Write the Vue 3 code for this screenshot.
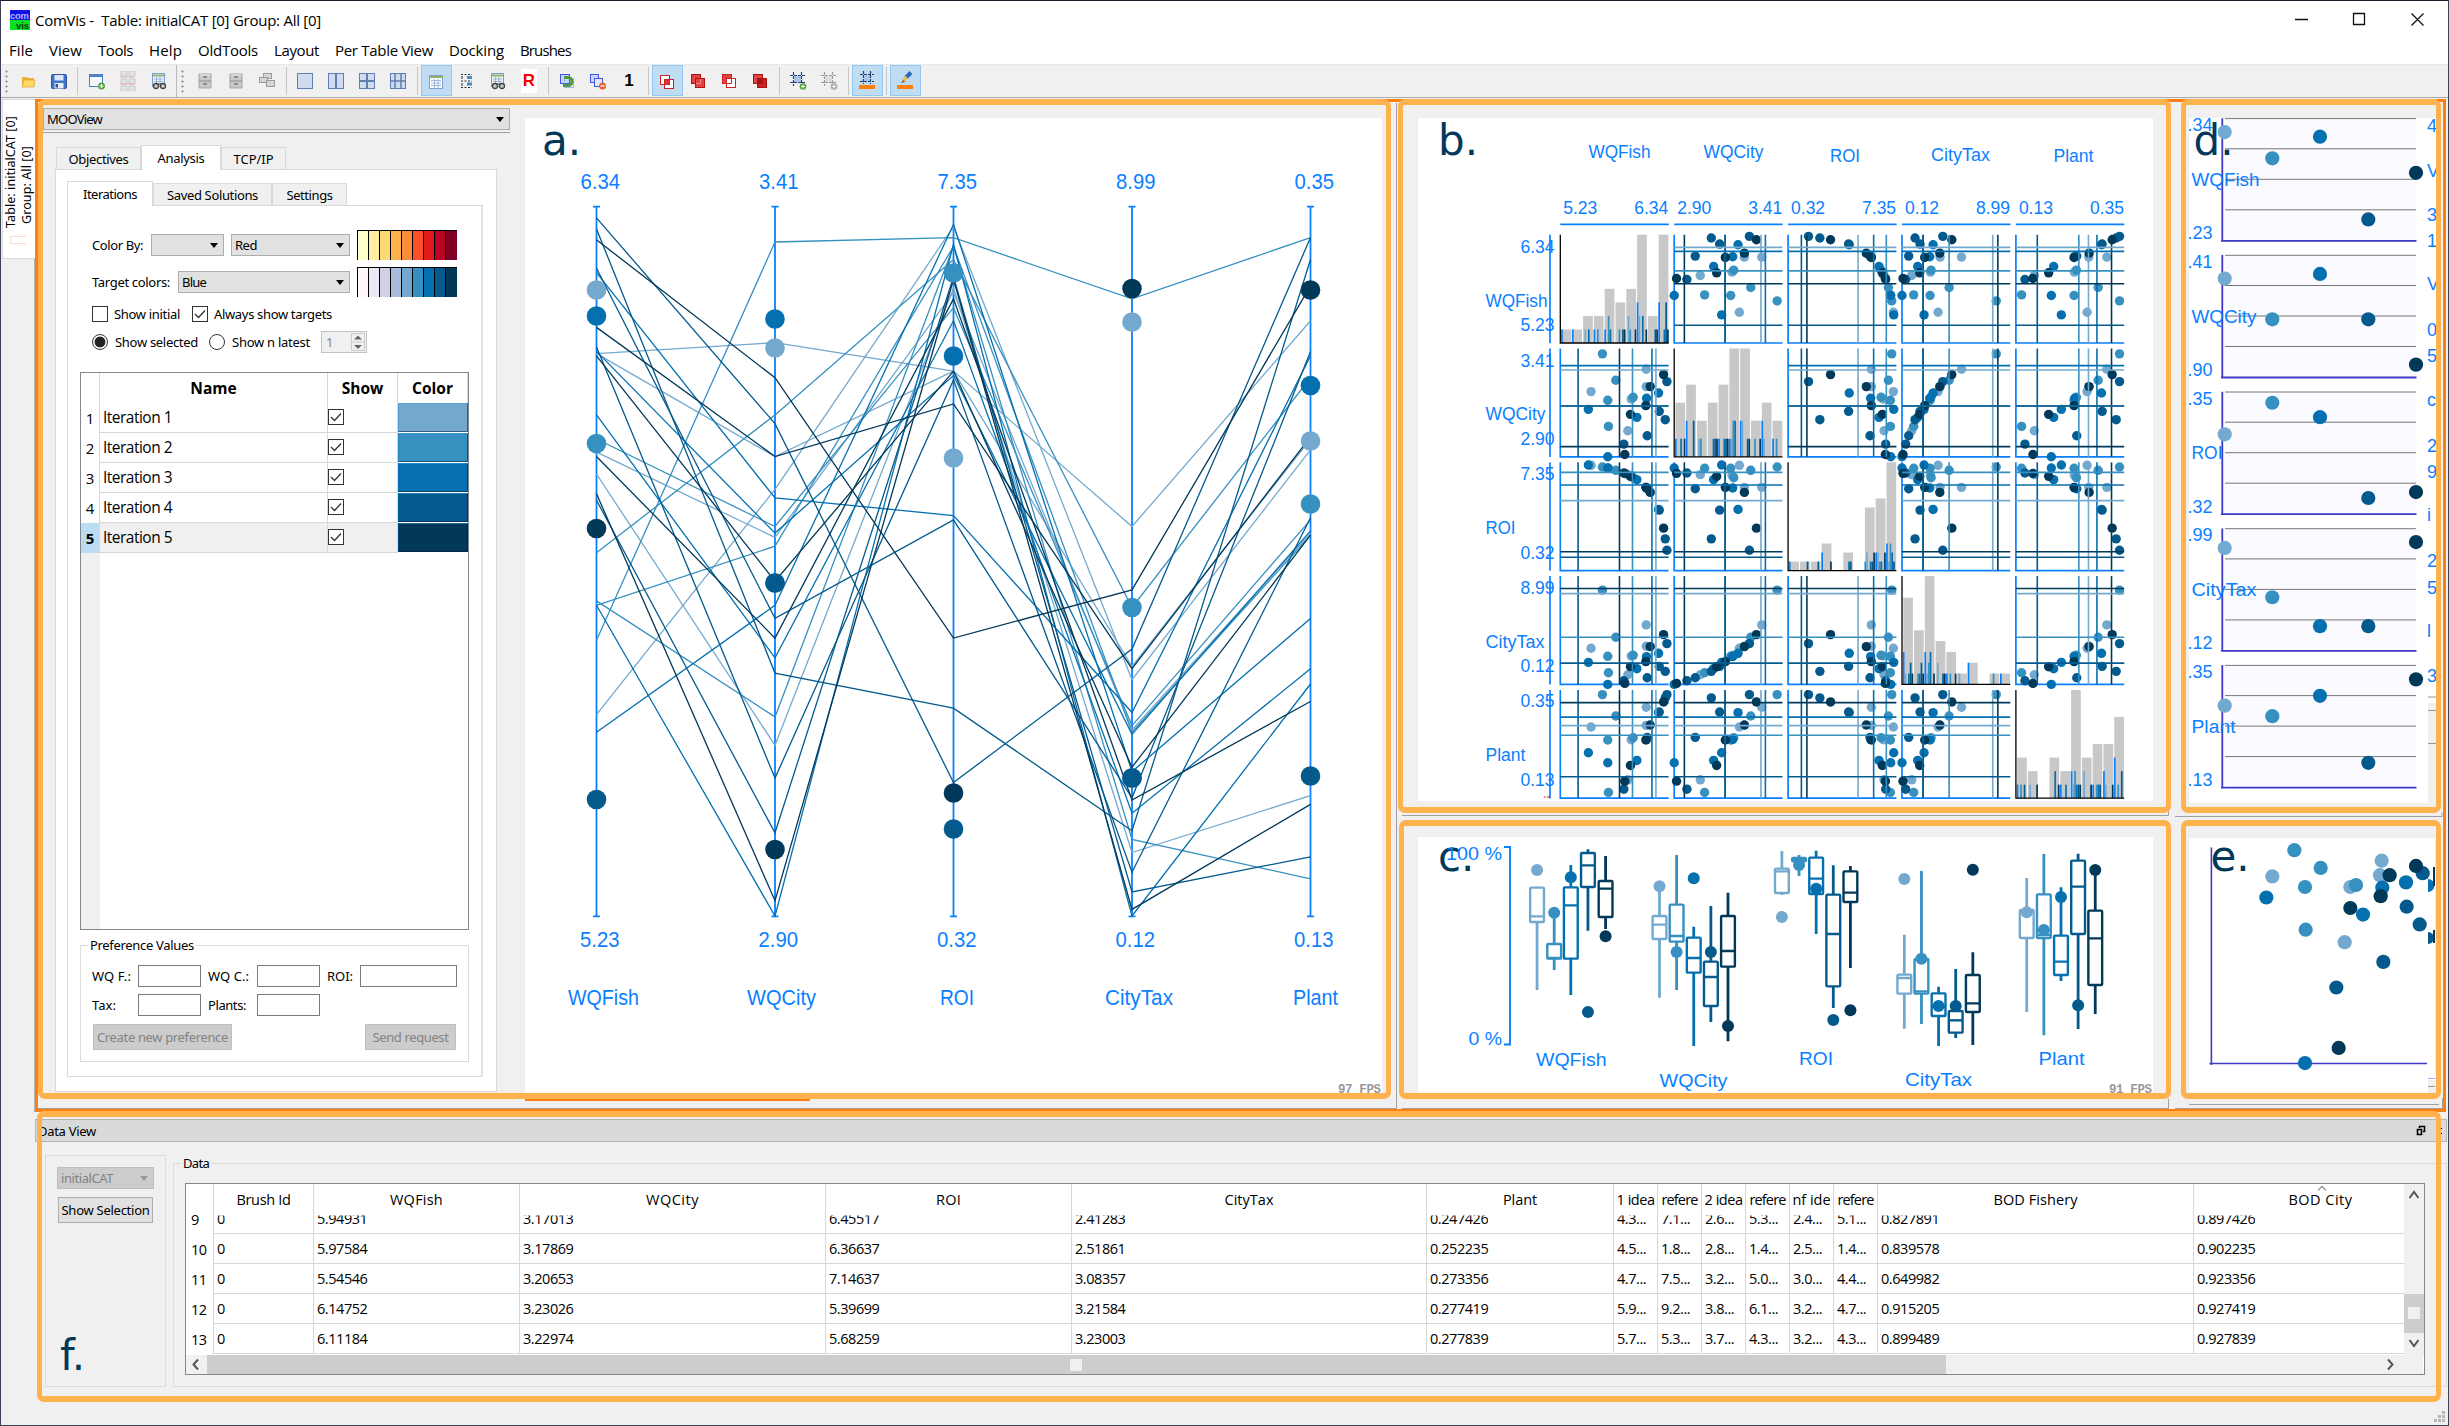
<script setup>
const palette = ['#74a9cf', '#3690c0', '#0570b0', '#045a8d', '#023858']
const reds = ['#ffffcc', '#ffeda0', '#fed976', '#feb24c', '#fd8d3c', '#fc4e2a', '#e31a1c', '#bd0026', '#800026']
const blues = ['#fff7fb', '#ece7f2', '#d0d1e6', '#a6bddb', ...palette]
const names = ['WQFish', 'WQCity', 'ROI', 'CityTax', 'Plant']
const maxs = ['6.34', '3.41', '7.35', '8.99', '0.35']
const mins = ['5.23', '2.90', '0.32', '0.12', '0.13']

// Spreads the letters of a label over a given length in pixels.
const vFit = {
  mounted(el, { value, modifiers }) {
    const range = document.createRange()
    range.selectNodeContents(el)
    const box = range.getBoundingClientRect()
    const natural = modifiers.tall ? box.height : box.width
    el.style.letterSpacing = (value - natural) / el.textContent.trim().length + 'px'
  }
}

// [iteration, WQFish, WQCity, ROI, CityTax, Plant] in plot units (0..324)
const raw = [
  [1, 257, 210, 249, 114, 218], [1, 257, 262, 249, 178, 272], [1, 212, 173, 285, 85, 175], [1, 202, 78, 287, 29, 55], [1, 92, 195, 315, 108, 213],
  [2, 218, 178, 278, 87, 181], [2, 166, 229, 300, 141, 246], [2, 144, 91, 306, 35, 17], [2, 142, 169, 306, 84, 174], [2, 126, 308, 310, 282, 310],
  [3, 294, 191, 183, 93, 256], [3, 258, 175, 247, 83, 176], [3, 229, 118, 272, 47, 113], [3, 142, 0, 307, 0, 106], [3, 84, 142, 316, 66, 136],
  [4, 314, 111, 95, 39, 300], [4, 319, 225, 61, 122, 310], [4, 296, 136, 181, 54, 258], [4, 260, 63, 245, 20, 182], [4, 190, 38, 292, 11, 27],
  [5, 309, 246, 127, 149, 288], [5, 256, 153, 249, 68, 174], [5, 269, 210, 234, 113, 219], [5, 210, 127, 282, 53, 98], [5, 193, 7, 291, 3, 51]
]
const points = raw.map(([k, ...v]) => ({ k, v: v.map(n => n / 324) }))

const axisX = [596.5, 775, 953.5, 1132, 1310.5]
const pcY = f => 916 - f * 709
const pcLines = points.map(p => ({ c: palette[p.k - 1], d: p.v.map((f, i) => `${axisX[i]},${pcY(f).toFixed(1)}`).join(' ') }))
// target height of every iteration on every axis
const targets = [
  [290, 443.5, 316, 799.5, 528.5],
  [348, 583, 319, 583, 849.5],
  [458, 273, 356, 829, 793],
  [322, 607.5, 778, 778, 288.5],
  [441, 504, 385.5, 776, 290]
]
const tf = targets.map(a => a.map(y => (916 - y) / 709))
const pcNames = [[568, 71], [747, 69], [940, 34], [1105, 68], [1293, 45]]

const cellX = i => 1560.3 + i * 113.9
const cellY = i => 234.7 + i * 113.8
const S = 108.3
const totals = [
  [1, 1, 2, 2, 4, 3, 4, 8, 2, 8],
  [3, 4, 2, 3, 4, 6, 6, 2, 3, 2],
  [1, 1, 1, 3, 0, 2, 0, 7, 8, 12],
  [8, 5, 10, 4, 3, 1, 2, 0, 1, 1],
  [3, 2, 0, 3, 2, 8, 3, 4, 4, 6]
]
const cells = []
for (let r = 0; r < 5; r++) {
  for (let c = 0; c < 5; c++) {
    const x = cellX(c)
    const y = cellY(r)
    if (r === c) {
      const unit = S / Math.max(...totals[r])
      const grey = totals[r].map((n, b) => ({ x: x + 1.2 + b * 10.8, y: y + S - n * unit, h: n * unit }))
      const bars = []
      totals[r].forEach((n, b) => {
        const counts = palette.map((_, k) => points.filter(p => p.k === k + 1 && Math.min(9, Math.floor(p.v[r] * 10)) === b).length)
        const rest = Math.max(0, n - counts.reduce((s, q) => s + q, 0))
        ;[rest, ...counts].forEach((q, s) => {
          const m = Math.min(q, 3)
          if (m) bars.push({ x: x + 0.8 + b * 10.8 + s * 1.75, y: y + S - m * unit, h: m * unit, c: s ? palette[s - 1] : '#0a80ff' })
        })
      })
      cells.push({ x, y, diag: true, grey, bars })
    } else {
      cells.push({
        x, y, diag: false,
        dots: points.map(p => ({ x: x + p.v[c] * S, y: y + S - p.v[r] * S, c: palette[p.k - 1] })),
        vs: tf[c].map((f, k) => ({ p: x + f * S, c: palette[k] })),
        hs: tf[r].map((f, k) => ({ p: y + S - f * S, c: palette[k] }))
      })
    }
  }
}
const topNames = [[1588.5, 158, 62], [1703.5, 158, 60], [1830, 162, 30], [1931, 160.5, 59], [2053.5, 162, 40]]
const sideWidths = [62, 60, 30, 59, 40]

// [centre, whisker top, box top, median, box bottom, whisker bottom, target]
const boxRaw = [
  [282, 260, 263, 349, 366, 570, 210], [316, 340, 432, 474, 476, 510, 338], [349, 195, 262, 316, 476, 585, 232], [383, 148, 159, 196, 261, 392, 636], [418, 168, 243, 266, 351, 387, 409],
  [525, 258, 348, 374, 417, 593, 259], [559, 165, 314, 408, 425, 570, 456], [593, 380, 413, 474, 518, 738, 235], [627, 318, 485, 531, 618, 666, 456], [661, 278, 348, 453, 500, 724, 678],
  [768, 153, 206, 214, 279, 285, 351], [802, 165, 174, 180, 184, 228, 195], [836, 152, 173, 236, 282, 402, 266], [870, 196, 284, 402, 559, 624, 660], [904, 198, 214, 278, 306, 504, 631],
  [1011, 404, 524, 534, 581, 686, 237], [1045, 213, 477, 574, 581, 672, 476], [1079, 560, 580, 620, 648, 738, 618], [1113, 507, 633, 661, 698, 714, 618], [1147, 457, 525, 610, 636, 735, 209],
  [1254, 234, 330, 336, 414, 636, 337], [1288, 162, 283, 405, 414, 706, 390], [1322, 262, 407, 485, 525, 543, 291], [1356, 161, 182, 260, 402, 687, 616], [1390, 225, 332, 415, 555, 642, 210]
]
const boxes = boxRaw.map(([x, ...ys], i) => {
  const [wt, top, med, bot, wb, dot] = ys.map(v => 800 + v / 3)
  return { x: 1395 + x / 1.985, wt, top, med, bot, wb, dot, c: palette[i % 5] }
})
const boxNames = [[1536, 1066, 70.5], [1659.5, 1087, 68], [1799, 1065, 34], [1905, 1086, 67], [2038.5, 1065, 46]]

const stripX = [2224.7, 2272.3, 2320, 2368.3, 2416]
const stripRaw = [[64, 104, 71, 197, 126], [287, 349, 280, 349, 418], [524, 476, 498, 621, 612], [697, 772, 816, 816, 688], [937, 953, 922, 1024, 897]]
const strips = stripRaw.map((ys, i) => ({ y: 118.3 + i * 136.7, dots: ys.map((v, k) => ({ x: stripX[k], y: 90 + v / 1.522, c: palette[k] })) }))
const stripNameW = [68, 65, 31, 65, 44]
const slivers = [['4', 132], ['V', 177], ['3', 221], ['1', 247], ['V', 290], ['0', 336], ['5', 362], ['c', 406], ['2', 452], ['9', 478], ['i', 521], ['2', 567], ['5', 594], ['l', 637], ['3', 682]]

const scatter = [
  [403, 1157, 2], [337, 1197, 1], [319, 1229, 3], [482, 1184, 2], [435, 1213, 2], [571, 1213, 1], [588, 1210, 2], [437, 1278, 2], [665, 1173, 1],
  [660, 1195, 1], [667, 1214, 3], [689, 1195, 5], [662, 1227, 5], [571, 1245, 5], [609, 1255, 3], [554, 1297, 1], [529, 1366, 4], [536, 1458, 5],
  [435, 1481, 3], [670, 1327, 4], [738, 1206, 3], [740, 1243, 4], [788, 1192, 4], [768, 1181, 5], [779, 1270, 4]
].map(([x, y, k]) => ({ x: 2160 + x / 3, y: 90 + y / 1.522, c: palette[k - 1] }))

const menus = [['File', 24], ['View', 33], ['Tools', 35], ['Help', 33], ['OldTools', 60], ['Layout', 45], ['Per Table View', 98], ['Docking', 55], ['Brushes', 51]]
const toolGroups = [
  ['open', 'save'], ['addwin', 'grid', 'find'], ['!'], ['cabinet', 'cabinet', 'stack'], ['pane1', 'pane2', 'pane4', 'pane6'],
  ['*table', 'rows', 'find', 'R'], ['green', 'minus', 'one'], ['*sq1', 'sq2', 'sq3', 'sq4'], ['crop', 'cropgrey'], ['*cropo'], ['*brush']
]
const headers = [['', 0], ['Brush Id', 54], ['WQFish', 53], ['WQCity', 53], ['ROI', 25], ['CityTax', 49], ['Plant', 34], ['1 idea', 38], ['refere', 36], ['2 idea', 38], ['refere', 36], ['nf ide', 38], ['refere', 36], ['BOD Fishery', 84], ['BOD City', 64]]
const rows = [
  ['9', '0', '5.94931', '3.17013', '6.45517', '2.41283', '0.247426', '4.3...', '7.1...', '2.6...', '5.3...', '2.4...', '5.1...', '0.827891', '0.897426'],
  ['10', '0', '5.97584', '3.17869', '6.36637', '2.51861', '0.252235', '4.5...', '1.8...', '2.8...', '1.4...', '2.5...', '1.4...', '0.839578', '0.902235'],
  ['11', '0', '5.54546', '3.20653', '7.14637', '3.08357', '0.273356', '4.7...', '7.5...', '3.2...', '5.0...', '3.0...', '4.4...', '0.649982', '0.923356'],
  ['12', '0', '6.14752', '3.23026', '5.39699', '3.21584', '0.277419', '5.9...', '9.2...', '3.8...', '6.1...', '3.2...', '4.7...', '0.915205', '0.927419'],
  ['13', '0', '6.11184', '3.22974', '5.68259', '3.23003', '0.277839', '5.7...', '5.3...', '3.7...', '4.3...', '3.2...', '4.3...', '0.899489', '0.927839']
]
</script>

<template>
  <div class="window">
    <header class="title">
      <svg class="logo" width="20" height="20" viewBox="0 0 20 20">
        <rect width="20" height="11" fill="#1010e0" /><rect y="10" width="20" height="10" fill="#08e020" />
        <text x="0" y="9" font-size="9.5" fill="#a9b4ff" textLength="19">com</text>
        <text x="6" y="18.5" font-size="9.5" fill="#063a10" textLength="13">vis</text>
      </svg>
      <span v-fit="286" class="caption">ComVis -&nbsp; Table: initialCAT [0] Group: All [0]</span>
      <svg class="controls" width="150" height="16" viewBox="0 0 150 16" fill="none" stroke="#111" stroke-width="1.3">
        <path d="M6 7.5h13M64.5 1.5h11v11h-11zM122.500 1.500l12 12M134.500 1.500l-12 12" />
      </svg>
    </header>
    <nav class="menu"><span v-for="m in menus" :key="m[0]" class="menu-item" :style="{ width: m[1] + 'px' }"><span v-fit="m[1]">{{ m[0] }}</span></span></nav>

    <div class="toolbar">
      <i class="grip"></i>
      <template v-for="(g, gi) in toolGroups" :key="gi">
        <div v-if="g[0] === '!'" class="break"><i class="grip"></i></div>
        <template v-else>
          <i v-if="gi && toolGroups[gi - 1][0] !== '!'" class="sep"></i>
          <div v-for="(t, ti) in g" :key="ti" class="tool" :class="{ on: t[0] === '*' }">
            <b v-if="t === 'R'" class="r">R</b>
            <b v-else-if="t === 'one'" class="one">1</b>
            <svg v-else width="18" height="20" viewBox="0 0 18 20" fill="none">
              <g v-if="t === 'open'"><path d="M3 6h5l1 1h6v8H3z" fill="#e9b43c" /><path d="M5 9h11l-1 7H3z" fill="#ffd967" stroke="#dca32c" stroke-width=".7" /></g>
              <g v-else-if="t === 'save'"><rect x="1.500" y="3.500" width="15" height="14" rx="1" fill="#3f74c9" stroke="#2a56a0" /><rect x="4.500" y="4" width="9" height="5.500" fill="#dbe7fa" /><rect x="4.500" y="12" width="9" height="5.500" fill="#e9eef7" /><rect x="5.500" y="13" width="2.500" height="3.500" fill="#2a56a0" /></g>
              <g v-else-if="t === 'addwin'"><rect x="1.500" y="3.500" width="13" height="12" fill="#f4f8ff" stroke="#4d7fc4" /><path d="M1 5h14" stroke="#4d7fc4" stroke-width="2" /><circle cx="13.500" cy="15" r="3.500" fill="#5ca244" /><path d="M11.500 15h4M13.500 13v4" stroke="#fff" stroke-width="1.200" /></g>
              <g v-else-if="t === 'grid'" stroke="#c6c9ce"><path d="M2 0h6v5H2zM10 0h6v5h-6zM2 8h6v5H2zM10 8h6v5h-6zM2 15h6v5H2zM10 15h6v5h-6z" fill="#e2e3e6" /><path d="M1 6h15M1 13h15" stroke="#e3b0b0" /></g>
              <g v-else-if="t === 'find'"><rect x="2.500" y="2.500" width="12" height="13" fill="#eef3fb" stroke="#7d9cc9" /><path d="M3 4.500h11" stroke="#8fb36c" stroke-width="2" /><path d="M4 8h9M4 10.500h9M6.500 6v8M10 6v8" stroke="#8aa6cf" stroke-width=".8" /><circle cx="6" cy="15" r="2.500" fill="#ccc" stroke="#444" stroke-width="1.300" /><circle cx="13" cy="15" r="2.500" fill="#ccc" stroke="#444" stroke-width="1.300" /><path d="M7 13h5" stroke="#444" /></g>
              <g v-else-if="t === 'cabinet'"><path d="M3 3h12v14H3z" fill="#c9c9c9" stroke="#a5a5a5" /><path d="M3 10h12" stroke="#8c8c8c" /><path d="M7 6h4M7 13h4" stroke="#777" stroke-width="1.500" /><path d="M4 4h10" stroke="#efefef" /></g>
              <g v-else-if="t === 'stack'" fill="#d6d6d6" stroke="#9a9a9a"><rect x="5.500" y="2.500" width="8" height="5" /><rect x="1.500" y="6.500" width="8" height="5" /><rect x="8.500" y="9.500" width="8" height="6" /></g>
              <g v-else-if="t.startsWith('pane')" stroke="#5f7faf"><rect x="1.500" y="2.500" width="15" height="15" fill="#cfdcef" /><path v-if="t === 'pane2'" d="M9 2v16" stroke-width="2" /><path v-if="t === 'pane4'" d="M9 2v16M1 10h16" stroke-width="2" /><path v-if="t === 'pane6'" d="M6 2v16M12 2v16M1 10h16" stroke-width="1.500" /></g>
              <g v-else-if="t === '*table'"><rect x="2.500" y="4.500" width="13" height="13" fill="#fff" stroke="#7f9fce" /><path d="M2 6h14" stroke="#8fb36c" stroke-width="2" /><path d="M4 9.500h10M4 12h10M4 14.500h10M7.500 8v9M11 8v9" stroke="#9db6da" /></g>
              <g v-else-if="t === 'rows'" stroke="#333"><path d="M3 3.500h11M3 10h11M3 16.500h11" stroke-dasharray="2 1.500" /><path d="M9 6.500h5M9 13h5" stroke="#4a8abf" stroke-width="3" /><path d="M4 5v3M4 12v3" /></g>
              <g v-else-if="t === 'green'"><rect x="2.500" y="3.500" width="9" height="9" fill="#c9d5ff" stroke="#4455dd" /><rect x="6.500" y="7.500" width="9" height="9" fill="none" stroke="#8a94e8" stroke-dasharray="2 1" /><path d="M6 6.500h4a4 4 0 0 1 0 8H5" stroke="#4b9a44" stroke-width="3" /></g>
              <g v-else-if="t === 'minus'"><rect x="1.500" y="3.500" width="8" height="8" fill="#c9d5ff" stroke="#4455dd" /><rect x="5.500" y="7.500" width="8" height="8" fill="#e2e8ff" stroke="#4455dd" /><circle cx="13.500" cy="15" r="3.500" fill="#e8622a" /><path d="M11.500 15h4" stroke="#fff" stroke-width="1.300" /></g>
              <g v-else-if="t === '*sq1'" stroke="#c22"><rect x="2.500" y="4.500" width="9" height="9" fill="#fff" /><rect x="6.500" y="8.500" width="9" height="9" fill="#fff" /><rect x="6.500" y="8.500" width="5" height="5" fill="#d33" /></g>
              <g v-else-if="t === 'sq2'" stroke="#b11"><rect x="2.500" y="3.500" width="9" height="9" fill="#d44" /><rect x="6.500" y="7.500" width="9" height="9" fill="#d44" /><path d="M7 12.500h4.500V8" stroke="#e88" /></g>
              <g v-else-if="t === 'sq3'" stroke="#c22"><rect x="2.500" y="3.500" width="9" height="9" fill="#d44" /><rect x="6.500" y="7.500" width="9" height="9" fill="#fff" /><path d="M7 12.500h4.500V8" /></g>
              <g v-else-if="t === 'sq4'" stroke="#a11"><rect x="2.500" y="3.500" width="9" height="9" fill="#d44" /><rect x="6.500" y="7.500" width="9" height="9" fill="#c22" /><rect x="6.500" y="7.500" width="5" height="5" fill="#a11" /></g>
              <g v-else-if="t === 'crop' || t === 'cropgrey'" :stroke="t === 'crop' ? '#23406a' : '#999'"><path d="M4.500 1v14M12.500 1v14M1 4.500h15M1 11.500h15" stroke-width="1.200" stroke-dasharray="3 1" /><rect x="5" y="5" width="7" height="6" :fill="t === 'crop' ? '#a9c4ea' : '#ddd'" stroke="none" /><circle cx="14" cy="15.500" r="3.300" :fill="t === 'crop' ? '#5ca244' : '#aaa'" stroke="none" /><path d="M12.200 15.500h3.600M14 13.700v3.600" stroke="#fff" /></g>
              <g v-else-if="t === '*cropo'" stroke="#23406a"><path d="M5.500 0v13M12.500 0v13M2 3.500h14M2 10.500h14" stroke-width="1.200" stroke-dasharray="3 1" /><rect x="6" y="4" width="6" height="6" fill="#a9c4ea" stroke="none" /><rect x="1" y="14" width="16" height="4" fill="#ff7f0e" stroke="none" /></g>
              <g v-else-if="t === '*brush'"><path d="M15 1.500l-5 5" stroke="#2f66c0" stroke-width="4" /><path d="M10.500 6l-3 4" stroke="#e2c06a" stroke-width="4" /><path d="M7 9l-2 3.500 4-2z" fill="#7b5a2a" /><rect x="1" y="14" width="16" height="4" fill="#ff7f0e" /></g>
            </svg>
          </div>
        </template>
      </template>
    </div>

    <div class="workspace">
      <aside class="side-tabs">
        <div class="side-tab"><div><span v-fit.tall="112">Table: initialCAT [0]</span></div><div class="grp"><span v-fit.tall="78">Group: All [0]</span></div><i class="mark"></i></div>
      </aside>
      <main class="dock">
        <section class="panel pa">
          <div class="side">
            <div class="combo wide"><span v-fit="55">MOOView</span><i class="arrow"></i></div>
            <div class="under"></div>
            <div class="tabs outer-tabs">
              <div class="tab" style="width: 85px"><span v-fit="60">Objectives</span></div>
              <div class="tab active" style="width: 80px"><span v-fit="47">Analysis</span></div>
              <div class="tab" style="width: 65px"><span v-fit="40">TCP/IP</span></div>
            </div>
            <div class="pane outer">
              <div class="tabs">
                <div class="tab active" style="width: 86px"><span v-fit="54">Iterations</span></div>
                <div class="tab" style="width: 119px"><span v-fit="91">Saved Solutions</span></div>
                <div class="tab" style="width: 75px"><span v-fit="46">Settings</span></div>
              </div>
              <div class="pane inner">
                <div class="row first">
                  <span class="lab" style="width: 59px"><span v-fit="51">Color By:</span></span>
                  <div class="combo" style="width: 73px"><i class="arrow"></i></div>
                  <div class="combo" style="width: 119px; margin-left: 7px"><span v-fit="22">Red</span><i class="arrow"></i></div>
                  <div class="swatches"><i v-for="c in reds" :key="c" :style="{ background: c }"></i></div>
                </div>
                <div class="row second">
                  <span class="lab" style="width: 86px"><span v-fit="78">Target colors:</span></span>
                  <div class="combo" style="width: 172px"><span v-fit="24">Blue</span><i class="arrow"></i></div>
                  <div class="swatches"><i v-for="c in blues" :key="c" :style="{ background: c }"></i></div>
                </div>
                <div class="row checks">
                  <i class="check"></i><span class="lab" style="width: 78px"><span v-fit="66">Show initial</span></span>
                  <i class="check"><svg width="16" height="16" viewBox="0 0 16 16"><path d="M3 8l3.500 3.500L13 4.500" fill="none" stroke="#333" stroke-width="1.300" /></svg></i><span class="lab"><span v-fit="118">Always show targets</span></span>
                </div>
                <div class="row radios">
                  <i class="radio sel"></i><span class="lab" style="width: 94px"><span v-fit="83">Show selected</span></span>
                  <i class="radio"></i><span class="lab" style="width: 89px"><span v-fit="78">Show n latest</span></span>
                  <div class="spin"><span>1</span><svg width="14" height="18" viewBox="0 0 14 18"><path d="M.5.5h13v17H.5zM0 9h14" fill="#f0f0f0" stroke="#ccc" /><path d="M3 6.500h8l-4-4zM3 12h8l-4 4z" fill="#666" /></svg></div>
                </div>
                <div class="itable">
                  <div class="irow ihead"><span></span><span>Name</span><span>Show</span><span>Color</span></div>
                  <div v-for="(c, i) in palette" :key="c" class="irow" :class="{ cur: i === 4 }">
                    <span class="num">{{ i + 1 }}</span>
                    <span class="nm"><span v-fit="69">Iteration {{ i + 1 }}</span></span>
                    <span class="ck"><i class="check"><svg width="16" height="16" viewBox="0 0 16 16"><path d="M3 8l3.500 3.500L13 4.500" fill="none" stroke="#333" stroke-width="1.300" /></svg></i></span>
                    <span class="col" :style="{ background: c }"></span>
                  </div>
                  <div class="ifill"></div>
                </div>
                <div class="group">
                  <div class="legend"><span v-fit="104">Preference Values</span></div>
                  <div class="grow">
                    <span class="lab" style="width: 46px"><span v-fit="39">WQ F.:</span></span><i class="input"></i>
                    <span class="lab" style="width: 49px; margin-left: 7px"><span v-fit="41">WQ C.:</span></span><i class="input"></i>
                    <span class="lab" style="width: 33px; margin-left: 7px"><span v-fit="26">ROI:</span></span><i class="input long"></i>
                  </div>
                  <div class="grow">
                    <span class="lab" style="width: 46px"><span v-fit="24">Tax:</span></span><i class="input"></i>
                    <span class="lab" style="width: 49px; margin-left: 7px"><span v-fit="38">Plants:</span></span><i class="input"></i>
                  </div>
                  <div class="gbtns">
                    <div class="btn off" style="width: 139px"><span v-fit="131">Create new preference</span></div>
                    <div class="btn off" style="width: 91px"><span v-fit="76">Send request</span></div>
                  </div>
                </div>
              </div>
            </div>
          </div>
          <svg class="plot" width="857" height="975" viewBox="525 118 857 975">
            <rect x="525" y="118" width="857" height="975" fill="#fff" />
            <g stroke="#0a80ff" stroke-width="1.8"><path v-for="x in axisX" :key="x" :d="`M${x} 207V916M${x - 3.5} 206.700h7M${x - 3.500} 916.300h7`" /></g>
            <polyline v-for="(l, i) in pcLines" :key="i" :points="l.d" :stroke="l.c" fill="none" stroke-width="1.3" />
            <template v-for="(t, a) in targets" :key="a"><circle v-for="(y, k) in t" :key="k" :cx="axisX[a]" :cy="y" r="9.800" :fill="palette[k]" /></template>
            <g class="blue" font-size="21.500">
              <template v-for="(n, i) in names" :key="n">
                <text :x="axisX[i] - 16" y="189" textLength="39.500" lengthAdjust="spacingAndGlyphs">{{ maxs[i] }}</text>
                <text :x="axisX[i] - 16.500" y="947" textLength="39.500" lengthAdjust="spacingAndGlyphs">{{ mins[i] }}</text>
                <text :x="pcNames[i][0]" y="1005" :textLength="pcNames[i][1]" lengthAdjust="spacingAndGlyphs">{{ n }}</text>
              </template>
            </g>
            <text class="fps" x="1338" y="1092.500" textLength="43">97 FPS</text>
            <text class="tag" x="542" y="154.500">a.</text>
          </svg>
        </section>

        <section class="panel pb">
          <svg class="plot" width="735" height="683" viewBox="1418 118 735 683">
            <rect x="1418" y="118" width="735" height="683" fill="#fff" />
            <g class="blue" font-size="17.500">
              <template v-for="(n, i) in names" :key="n">
                <text :x="topNames[i][0]" :y="topNames[i][1]" :textLength="topNames[i][2]" lengthAdjust="spacingAndGlyphs">{{ n }}</text>
                <text :x="cellX(i) + 3" y="213.500" textLength="34">{{ mins[i] }}</text>
                <text :x="cellX(i) + 74" y="213.500" textLength="34">{{ maxs[i] }}</text>
                <text x="1485.500" :y="306.800 + i * 113.600" :textLength="sideWidths[i]" lengthAdjust="spacingAndGlyphs">{{ n }}</text>
                <text x="1520.500" :y="253 + i * 113.600" textLength="34">{{ maxs[i] }}</text>
                <text x="1520.500" :y="331.300 + i * 113.700" textLength="34">{{ mins[i] }}</text>
              </template>
            </g>
            <g stroke="#0a80ff" stroke-width="1.700"><path v-for="i in 5" :key="i" :d="`M${cellX(i - 1)} 224.300h108.500M1550 ${cellY(i - 1)}v108.500`" /></g>
            <g v-for="(q, i) in cells" :key="i">
              <template v-if="q.diag">
                <rect v-for="(b, j) in q.grey" :key="j" :x="b.x" :y="b.y" width="9.700" :height="b.h" fill="#c8c8c8" />
                <rect v-for="(b, j) in q.bars" :key="'c' + j" :x="b.x" :y="b.y" width="1.700" :height="b.h" :fill="b.c" />
                <path :d="`M${q.x} ${q.y}v${S}h${S}`" stroke="#000" stroke-width="1.300" fill="none" />
              </template>
              <template v-else>
                <path :d="`M${q.x} ${q.y}v${S}h${S}`" stroke="#0a80ff" stroke-width="1.700" fill="none" />
                <circle v-for="(d, j) in q.dots" :key="j" :cx="d.x" :cy="d.y" r="4.700" :fill="d.c" />
                <path v-for="(l, j) in q.vs" :key="'v' + j" :d="`M${l.p} ${q.y}v${S}`" :stroke="l.c" stroke-width="1.600" />
                <path v-for="(l, j) in q.hs" :key="'h' + j" :d="`M${q.x} ${l.p}h${S}`" :stroke="l.c" stroke-width="1.600" />
              </template>
            </g>
            <path d="M1544 797h1.500M1547 797h3" stroke="#e00" />
            <text class="tag" x="1438" y="155">b.</text>
          </svg>
        </section>

        <section class="panel pd">
          <svg class="plot" width="247" height="685" viewBox="2189 118 247 685">
            <rect x="2189" y="118" width="247" height="585" fill="#fff" /><rect x="2189" y="118" width="239" height="685" fill="#fff" />
            <path d="M2428 697h8M2428 710.500h8M2428 743.500h8" stroke="#999" />
            <g v-for="(s, i) in strips" :key="i">
              <rect x="2224.700" :y="s.y" width="191.500" height="122" fill="#fafaff" />
              <path :d="`M2225 ${s.y + .3}h191M2225 ${s.y + 30.500}h191M2225 ${s.y + 61}h191M2225 ${s.y + 91.500}h191`" stroke="#777" stroke-width="1" />
              <path :d="`M2222.300 ${s.y}v122M2221 ${s.y + 122.500}h195.500`" stroke="#3f38c8" stroke-width="1.800" />
              <g class="blue" font-size="18">
                <text x="2187.500" :y="s.y + 13" textLength="25">{{ maxs[i].slice(1) }}</text>
                <text x="2187.500" :y="s.y + 121" textLength="25">{{ mins[i].slice(1) }}</text>
                <text x="2191.500" :y="s.y + 67.500" :textLength="stripNameW[i]" lengthAdjust="spacingAndGlyphs">{{ names[i] }}</text>
              </g>
            </g>
            <template v-for="(s, i) in strips" :key="'d' + i"><circle v-for="(d, k) in s.dots" :key="k" :cx="d.x" :cy="d.y" r="7.100" :fill="d.c" /></template>
            <g class="blue" font-size="18"><text v-for="(s, i) in slivers" :key="'s' + i" x="2427" :y="s[1]">{{ s[0] }}</text></g>
            <text class="tag" x="2193.500" y="154.500">d.</text>
          </svg>
        </section>

        <section class="panel pc">
          <svg class="plot" width="735" height="256" viewBox="1418 837 735 256">
            <rect x="1418" y="837" width="735" height="256" fill="#fff" />
            <text class="tag" x="1438" y="871">c.</text>
            <g class="blue" font-size="18">
              <text x="1446" y="860" textLength="56" lengthAdjust="spacingAndGlyphs">100 %</text>
              <text x="1468.500" y="1044.500" textLength="33.500" lengthAdjust="spacingAndGlyphs">0 %</text>
              <text v-for="(n, i) in names" :key="n" :x="boxNames[i][0]" :y="boxNames[i][1]" :textLength="boxNames[i][2]" lengthAdjust="spacingAndGlyphs">{{ n }}</text>
            </g>
            <path d="M1504 847h6v197.500h-6" fill="none" stroke="#0a80ff" stroke-width="1.900" />
            <g v-for="(b, i) in boxes" :key="i" :stroke="b.c" stroke-width="2.400" fill="none">
              <path :d="`M${b.x} ${b.wt}V${b.top}M${b.x} ${b.bot}V${b.wb}`" stroke-width="2.800" />
              <rect :x="b.x - 6.900" :y="b.top" width="13.800" :height="b.bot - b.top" rx="1" />
              <path :d="`M${b.x - 7} ${b.med}h14`" />
              <circle :cx="b.x" :cy="b.dot" r="6" :fill="b.c" stroke="none" />
            </g>
            <text class="fps" x="2109" y="1092.500" textLength="43">91 FPS</text>
          </svg>
        </section>

        <section class="panel pe">
          <svg class="plot" width="246" height="255" viewBox="2189 838 246 255">
            <rect x="2189" y="838" width="246" height="255" fill="#fff" />
            <path d="M2211.400 847.500V1065M2209.500 1063.500h217.500" stroke="#3f38c8" stroke-width="1.600" />
            <circle v-for="(p, i) in scatter" :key="i" :cx="p.x" :cy="p.y" r="7.100" :fill="p.c" />
            <path d="M2428 879a6 6 0 0 1 0 13z" fill="#0570b0" /><path d="M2428 932a5 5 0 0 1 0 12z" fill="#045a8d" />
            <path d="M2434 867v19M2434 930v13" stroke="#023858" stroke-width="2" />
            <rect x="2428" y="1080" width="7" height="13" fill="#f0f0f0" /><path d="M2428 1078.500h7" stroke="#aaa4e8" /><path d="M2428 1086.500h7" stroke="#999" />
            <text class="tag" x="2210.500" y="870.500">e.</text>
          </svg>
        </section>
        <svg class="splits" width="2411" height="1013" viewBox="35 99 2411 1013" fill="none" stroke="#a0a0a0">
          <path d="M525 1100h285" stroke="#ff7f0e" stroke-width="2" />
          <path d="M38 1108.500h1358.500V103M1402 815.500h766.500v-4M1402 1108.500h766.500v-10M2175 816.500h267v-4M2189 1104.500h250M2175 1108.500h267.500V1098" />
        </svg>
      </main>
    </div>

    <section class="dataview">
      <div class="dvbar"><span v-fit="58">Data View</span>
        <svg width="28" height="12" viewBox="0 0 28 12" fill="none" stroke="#000"><path d="M4.500 3V1.500h5v5H8M2.500 4.500h4v5h-4z" stroke-width="1.600" /><path d="M21 3l6 6M27 3l-6 6" /></svg>
      </div>
      <div class="dvbody">
        <div class="dvleft">
          <div class="combo off"><span v-fit="52">initialCAT</span><i class="arrow"></i></div>
          <div class="btn"><span v-fit="88">Show Selection</span></div>
          <div class="ftag">f.</div>
        </div>
        <div class="dvgroup">
          <div class="legend"><span v-fit="26">Data</span></div>
          <div class="dtable">
            <div class="dmain">
              <div class="dgrid">
                <div class="drow dhead"><span v-for="(h, i) in headers" :key="i"><em v-if="h[0]" v-fit="h[1]">{{ h[0] }}</em><i v-if="i === 14" class="sort"></i></span></div>
                <div v-for="(r, i) in rows" :key="i" class="drow" :class="{ part: i === 0 }"><span v-for="(c, j) in r" :key="j"><em>{{ c }}</em></span></div>
              </div>
              <div class="vbar"><svg width="20" height="170" viewBox="0 0 20 170"><path d="M5.500 14l4.500-6 4.500 6M5.500 156l4.500 6 4.500-6" fill="none" stroke="#555" stroke-width="2" /><rect y="110" width="20" height="39" fill="#cdcdcd" /><rect x="4" y="123" width="12" height="12" fill="#f0f0f0" /></svg></div>
            </div>
            <div class="hbar"><svg width="2237" height="19" viewBox="0 0 2237 19"><rect width="2237" height="19" fill="#f0f0f0" /><path d="M12 4.500L7.500 9.500l4.500 5M2202 4.500l4.500 5-4.500 5" fill="none" stroke="#555" stroke-width="2" /><rect x="21" width="1739" height="19" fill="#cdcdcd" /><rect x="884" y="4" width="12" height="12" fill="#f0f0f0" /></svg></div>
          </div>
        </div>
      </div>
    </section>
    <footer class="status"><svg width="12" height="12" viewBox="0 0 12 12" fill="#b8b8b8"><path d="M8 0h3v3H8zM4 4h3v3H4zM8 4h3v3H8zM0 8h3v3H0zM4 8h3v3H4zM8 8h3v3H8z" /></svg></footer>
    <div class="frame-f"></div>
  </div>
</template>

<style>
body { margin: 0; background: #f0f0f0; }
</style>

<style scoped>
.window { position: relative; box-sizing: border-box; width: 2449px; height: 1426px; overflow: hidden; background: #f0f0f0; border: 1px solid #3a4256; border-top-color: #1f1b2c; display: flex; flex-direction: column; font: 13px "Noto Sans", sans-serif; color: #000; white-space: nowrap; }
.window * { box-sizing: border-box; }
em { font-style: normal; }
.title { height: 36px; background: #fff; display: flex; align-items: center; padding: 1px 0 0 9px; flex: none; }
.logo { font-family: "Liberation Sans", sans-serif; font-weight: bold; margin-right: 5px; }
.caption { font: 15px "Open Sans", sans-serif; }
.controls { margin-left: auto; margin-right: 9px; }
.menu { height: 27px; background: #fff; display: flex; gap: 16px; padding: 3px 0 0 8px; font: 15px/20px "Open Sans", sans-serif; flex: none; }
.menu-item { display: block; }
.toolbar { height: 34px; border-bottom: 1px solid #aaa; border-top: 1px solid #e8e8e8; display: flex; align-items: flex-start; flex: none; }
.grip { width: 3px; height: 26px; margin: 4px 4px 0; background: radial-gradient(circle, #a8a8a8 1px, transparent 1.300px) 0 0 / 3px 5px; flex: none; }
.tool { width: 31px; height: 31px; display: flex; align-items: center; justify-content: center; border: 1px solid transparent; flex: none; }
.tool.on { background: #c0dcf3; border-color: #90c8f6; }
.sep { width: 1px; height: 28px; margin: 2px 3px 0; background: #c6c6c6; flex: none; }
.break { width: 15.500px; display: flex; border-left: 1px solid #bbb; margin-left: 2px; margin-right: -2px; height: 32px; }
.r { font: bold 17px "Liberation Sans", sans-serif; color: #f00; background: #fff; padding: 0 2px; line-height: 24px; }
.one { font: bold 17px "Liberation Sans", sans-serif; }
.workspace { height: 1014px; display: flex; flex: none; padding-top: 1px; }
.side-tabs { width: 34px; border-right: 1px solid #b4b4b4; flex: none; padding-left: 1px; }
.side-tab { height: 160px; width: 33px; background: #fff; border: 1px solid #d9d9d9; border-left: 0; writing-mode: vertical-rl; transform: rotate(180deg); line-height: 16px; font-size: 12.500px; padding-top: 30px; position: relative; }
.mark { position: absolute; top: 14px; right: 7px; width: 16px; height: 8px; border: 1px solid #fbdcc8; border-left: 0; }
.grp { padding-top: 4px; }
.dock { width: 2411px; height: 1013px; flex: none; box-shadow: inset 0 0 0 3px #ff7f0e; padding: 0 5px 0 3px; display: grid; grid-template-columns: 1353px 773px 263px; grid-template-rows: 714px 279px; column-gap: 7px; row-gap: 7px; position: relative; }
.splits { position: absolute; left: 0; top: 0; pointer-events: none; }
.panel { background: #f0f0f0; border: solid #ffb14e; border-width: 6px 5px; border-radius: 7px; overflow: hidden; display: flex; }
.pa { grid-row: 1 / 3; }
.pb { padding: 13px 0 0 15px; } .pc { padding: 11px 0 0 14px; margin-left: 1px; }
.pd { padding: 13px 0 0 3px; margin-left: 3px; } .pe { padding: 12px 0 0 3px; margin-left: 3px; }
.plot { display: block; flex: none; }
.pa .plot { margin-top: 13px; }
.blue { fill: #0a80ff; font-family: "Liberation Sans", sans-serif; }
.tag { font: 42px "DejaVu Sans", sans-serif; fill: #023858; }
.fps { font: bold 12.500px "Liberation Mono", monospace; fill: #999; }
.side { width: 482px; flex: none; padding-top: 3px; }
.combo { height: 22px; border: 1px solid #adadad; background: #e1e1e1; display: flex; align-items: center; justify-content: space-between; padding: 0 5px 0 3px; flex: none; }
.wide { width: 467px; }
.arrow { width: 0; height: 0; border: 4px solid transparent; border-top: 5px solid #000; border-bottom: 0; margin-left: auto; }
.combo.off { background: #cccccc; border-color: #bfbfbf; color: #838383; }
.combo.off .arrow { border-top-color: #999; }
.under { width: 467px; height: 3px; border-bottom: 1px solid #a0a0a0; }
.tabs { display: flex; align-items: flex-end; height: 24px; margin-bottom: -1px; position: relative; }
.outer-tabs { margin: 13px 0 -1px 13px; }
.tab { height: 22px; border: 1px solid #d9d9d9; border-bottom: 0; margin-bottom: 1px; background: #f0f0f0; display: flex; align-items: center; justify-content: center; }
.tab.active { height: 25px; background: #fff; margin-bottom: 0; }
.pane { background: #fff; border: 1px solid #d9d9d9; }
.outer { margin-left: 12px; width: 442px; height: 923px; padding: 12px 0 0 11px; }
.inner { width: 416px; height: 872px; padding: 0 12px; border-right: 2px solid #e2e2e2; }
.row { display: flex; align-items: center; padding-left: 12px; }
.lab { flex: none; display: block; }
.first { margin-top: 24px; height: 30px; } .second { margin-top: 7px; height: 30px; }
.swatches { display: flex; width: 100px; height: 30px; margin-left: 7px; border-top: 1px solid #000; border-left: 1px solid #000; }
.swatches i { width: 11px; border-right: 1px solid #000; height: 29px; }
.swatches i:last-child { border: 0; }
.check { width: 16px; height: 16px; border: 1px solid #333; background: #fff; flex: none; display: block; margin-right: 6px; }
.check svg { display: block; margin: -1px; }
.checks { height: 20px; margin-top: 7px; }
.radios { height: 22px; margin-top: 7px; }
.radio { width: 16px; height: 16px; border: 1px solid #333; border-radius: 50%; margin-right: 7px; background: #fff; flex: none; }
.sel { background: radial-gradient(circle, #222 5px, #fff 5.800px); }
.spin { width: 46px; height: 22px; border: 1px solid #c4c4c4; background: #f0f0f0; color: #838383; display: flex; align-items: center; justify-content: space-between; padding: 0 1px 0 4px; }
.itable { margin-top: 19px; width: 389px; height: 558px; border: 1px solid #828790; display: flex; flex-direction: column; font: 15.500px "Open Sans", sans-serif; }
.irow { height: 30px; display: grid; grid-template-columns: 19px 228px 70px 70px; flex: none; }
.irow > span { border-right: 1px solid #d8d8d8; border-bottom: 1px solid #d8d8d8; display: flex; align-items: center; padding-bottom: 2px; }
.ihead > span { border-bottom: 0; justify-content: center; font-weight: bold; padding-bottom: 0; }
.irow .num { border-bottom: 0; justify-content: center; font-size: 15px; padding-bottom: 0; }
.irow .nm { padding-left: 3px; }
.cur .num { background: #bcdcf4; font-weight: bold; } .cur .nm, .cur .ck { background: #f0f0f0; }
.irow .col { border: 1px solid rgba(0, 20, 50, .5); border-left-color: rgba(0, 120, 200, .3); border-top-color: rgba(60, 160, 230, .5); margin-bottom: 1px; }
.ifill { flex: 1; width: 19px; background: #f0f0f0; }
.group { margin-top: 15px; width: 389px; height: 117px; border: 1px solid #dcdcdc; padding: 0 12px; }
.legend { height: 18px; line-height: 18px; margin-top: -10px; width: fit-content; padding: 0 2px; margin-left: -5px; background: #fff; }
.grow { display: flex; align-items: center; height: 22px; margin-top: 11px; margin-left: -1px; }
.grow + .grow { margin-top: 7px; }
.input { width: 63px; height: 22px; border: 1px solid #7a7a7a; background: #fff; flex: none; }
.long { width: 97px; }
.gbtns { display: flex; justify-content: space-between; margin-top: 8px; }
.btn { height: 26px; border: 1px solid #adadad; background: #e1e1e1; display: flex; align-items: center; justify-content: center; }
.btn.off { background: #ccc; border-color: #bfbfbf; color: #838383; }
.dataview { height: 277px; flex: none; padding: 7px 1px 0 34px; display: flex; flex-direction: column; }
.dvbar { height: 23px; background: #dadada; border: 1px solid #b4b4b4; display: flex; align-items: center; justify-content: space-between; padding: 0 3px 0 2px; flex: none; }
.dvbody { display: flex; padding: 13px 0 0 10px; gap: 7px; }
.dvleft { width: 121px; height: 232px; border: 1px solid #dcdcdc; padding: 11px 11px 0; }
.dvleft .btn { margin: 8px 1px 0; }
.ftag { font: 42px/50px "DejaVu Sans", sans-serif; color: #023858; margin: 108px 0 0 3px; }
.dvgroup { width: 2274px; height: 224px; margin-top: 8px; border: 1px solid #dcdcdc; padding: 0 11px; }
.dvgroup .legend { background: #f0f0f0; margin-left: -4px; }
.dtable { width: 2240px; height: 192px; margin-top: 11px; border: 1px solid #828790; background: #fff; display: flex; flex-direction: column; }
.dmain { display: flex; height: 171px; }
.dgrid { width: 2218px; overflow: hidden; font: 14.500px "Open Sans", sans-serif; letter-spacing: -.45px; }
.drow { display: grid; grid-template-columns: 28px 100px 206px 306px 246px 355px 187px 44px 44px 44px 44px 44px 44px 316px 254px; height: 30px; }
.drow > span { border-right: 1px solid #d8d8d8; border-bottom: 1px solid #d8d8d8; padding-left: 3px; display: flex; align-items: center; overflow: hidden; }
.drow > span:first-child { border-bottom: 0; padding-left: 5px; }
.drow.dhead > span { border-bottom: 0; justify-content: center; padding: 0 3px; letter-spacing: 0; position: relative; }
.sort { position: absolute; top: 3px; left: 125px; width: 6px; height: 6px; border: solid #777; border-width: 1px 0 0 1px; transform: rotate(45deg); }
.drow em { flex: none; }
.part { height: 20px; }
.part > span { align-items: flex-end; }
.part em { line-height: 20px; margin-bottom: 4px; margin-top: -8px; }
.part > span:not(:first-child) em { clip-path: inset(6.500px 0 0 0); }
.vbar { width: 20px; background: #f0f0f0; height: 171px; }
.hbar { height: 19px; } .hbar svg { display: block; }
.status { flex: 1; display: flex; justify-content: flex-end; align-items: flex-end; padding: 0 2px 2px 0; }
.frame-f { position: absolute; left: 36px; top: 1110px; width: 2404px; height: 291px; border: solid #ffb14e; border-width: 6px 5px; border-radius: 7px; pointer-events: none; }
</style>
